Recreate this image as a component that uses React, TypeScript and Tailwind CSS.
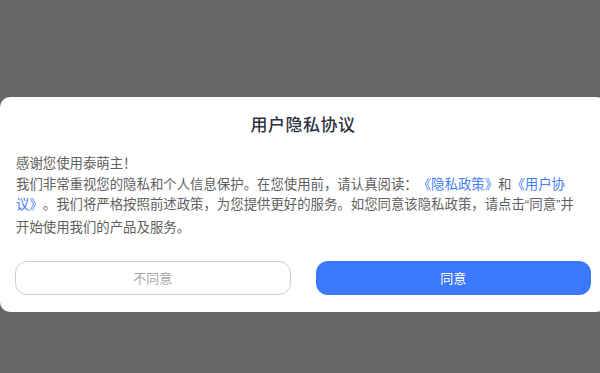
import React from 'react';

const App: React.FC = () => {
  return (
    <div
      className="h-[373px] w-[600px] overflow-hidden bg-[#666666] pt-[97px]"
      style={{ fontFamily: '"Noto Sans CJK SC", "Noto Sans", sans-serif' }}
    >
      <div className="w-[606px] rounded-[10px] bg-white px-[15px] pt-[15px] pb-[17px]">
        <h2 className="text-center text-[17px] leading-[24px] font-medium text-[#2f3140] tracking-[0.5px]">
          用户隐私协议
        </h2>

        <div className="mt-[16px] pl-[1px] text-[13.4px] leading-[20.5px] text-[#5f5f5f] whitespace-nowrap [text-spacing-trim:space-all]">
          <p>感谢您使用泰萌主！</p>
          <p>
            我们非常重视您的隐私和个人信息保护。在您使用前，请认真阅读：
            <span className="text-[#3f7ef6]">《隐私政策》</span>和<span className="text-[#3f7ef6]">《用户协</span>
          </p>
          <p>
            <span className="text-[#3f7ef6]">议》</span>。我们将严格按照前述政策，为您提供更好的服务。如您同意该隐私政策，请点击
            <span className="font-['Liberation_Sans']">“</span>同意<span className="font-['Liberation_Sans']">”</span>并
          </p>
          <p>开始使用我们的产品及服务。</p>
        </div>

        <div className="mt-[25px] grid grid-cols-2 gap-[25px]">
          <button className="h-[34px] rounded-[12px] border border-[#cfcfcf] bg-white text-[13px] text-[#a8a8a8]">
            不同意
          </button>
          <button className="h-[34px] rounded-[12px] bg-[#3c78fb] text-[13px] text-white">
            同意
          </button>
        </div>
      </div>
    </div>
  );
};

export default App;
